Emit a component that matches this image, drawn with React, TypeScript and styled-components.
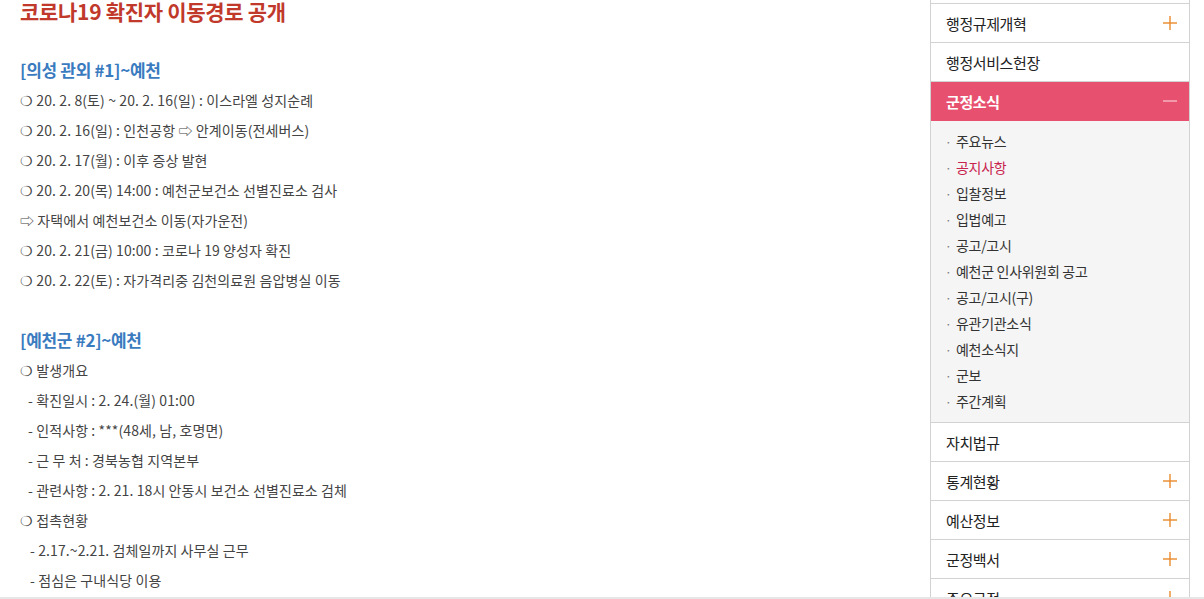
import styled, { createGlobalStyle } from 'styled-components';

const GlobalStyle = createGlobalStyle`
  html, body {
    margin: 0;
    padding: 0;
    background: #ffffff;
    font-family: 'Noto Sans CJK KR', 'Noto Sans', sans-serif;
    overflow: hidden;
  }
`;

const Screen = styled.div`
  width: 1204px;
  height: 599px;
  display: flex;
  flex-direction: column;
  overflow: hidden;
`;

const Page = styled.div`
  flex: 1;
  display: flex;
  overflow: hidden;
`;

const BottomStrip = styled.div`
  height: 2px;
  background: #e6e6e6;
`;

// 본문
const Main = styled.div`
  flex: 1;
  padding-left: 20px;
  color: #444;
`;

const Title = styled.h2`
  margin: 0;
  font-size: 21px;
  line-height: 23px;
  font-weight: 700;
  color: #c0392b;
  letter-spacing: -0.3px;
`;

const Section = styled.div<{ $first?: boolean }>`
  margin-top: ${(p) => (p.$first ? '32px' : '30px')};
`;

const SectionTitle = styled.h3`
  margin: 0;
  font-size: 17px;
  line-height: 30px;
  font-weight: 700;
  color: #3a7bbf;
  letter-spacing: -0.3px;
`;

const Line = styled.p<{ $indent?: number }>`
  margin: 0;
  font-size: 14px;
  line-height: 30px;
  color: #444;
  letter-spacing: 0.1px;
  padding-left: ${(p) => p.$indent || 0}px;
  white-space: nowrap;
`;

// 사이드 메뉴
const Side = styled.div`
  width: 258px;
  margin-right: 14px;
  border-left: 1px solid #d2d2d2;
  border-right: 1px solid #d2d2d2;
  padding-top: 3px;
`;

const MenuList = styled.ul`
  list-style: none;
  margin: 0;
  padding: 0;
  border-top: 1px solid #d2d2d2;
`;

const MenuRow = styled.li<{ $active?: boolean }>`
  height: 38px;
  display: flex;
  align-items: center;
  justify-content: space-between;
  padding: 0 12px 0 15px;
  border-bottom: 1px solid ${(p) => (p.$active ? '#e8506f' : '#d2d2d2')};
  background: ${(p) => (p.$active ? '#e8506f' : '#fff')};
  color: ${(p) => (p.$active ? '#fff' : '#222')};
  font-size: 15px;
  font-weight: ${(p) => (p.$active ? 700 : 400)};
  letter-spacing: -0.4px;
`;

const SubList = styled.ul`
  list-style: none;
  margin: 0;
  padding: 7px 0 8px;
  background: #f5f5f5;
  border-bottom: 1px solid #d2d2d2;
`;

const SubItem = styled.li<{ $active?: boolean }>`
  display: flex;
  align-items: center;
  height: 26px;
  padding-left: 14px;
  font-size: 14px;
  letter-spacing: -0.3px;
  color: ${(p) => (p.$active ? '#c8234f' : '#333')};
`;

const Dot = styled.span`
  width: 11px;
  color: #777;
  font-size: 12px;
`;

function Plus() {
  return (
    <svg width="14" height="14" viewBox="0 0 14 14">
      <line x1="7" y1="0" x2="7" y2="14" stroke="#e8892b" strokeWidth="1.4" />
      <line x1="0" y1="7" x2="14" y2="7" stroke="#e8892b" strokeWidth="1.4" />
    </svg>
  );
}

function Minus() {
  return (
    <svg width="14" height="14" viewBox="0 0 14 14">
      <line x1="0" y1="7" x2="14" y2="7" stroke="#f6c9d3" strokeWidth="1.2" />
    </svg>
  );
}

const subMenus = [
  '주요뉴스',
  '공지사항',
  '입찰정보',
  '입법예고',
  '공고/고시',
  '예천군 인사위원회 공고',
  '공고/고시(구)',
  '유관기관소식',
  '예천소식지',
  '군보',
  '주간계획',
];

const section1 = [
  '❍ 20. 2. 8(토) ~ 20. 2. 16(일) : 이스라엘 성지순례',
  '❍ 20. 2. 16(일) : 인천공항 ⇨ 안계이동(전세버스)',
  '❍ 20. 2. 17(월) : 이후 증상 발현',
  '❍ 20. 2. 20(목) 14:00 : 예천군보건소 선별진료소 검사',
  '⇨ 자택에서 예천보건소 이동(자가운전)',
  '❍ 20. 2. 21(금) 10:00 : 코로나 19 양성자 확진',
  '❍ 20. 2. 22(토) : 자가격리중 김천의료원 음압병실 이동',
];

const section2: [string, number][] = [
  ['❍ 발생개요', 0],
  ['- 확진일시 : 2. 24.(월) 01:00', 8],
  ['- 인적사항 : ***(48세, 남, 호명면)', 8],
  ['- 근 무 처 : 경북농협 지역본부', 8],
  ['- 관련사항 : 2. 21. 18시 안동시 보건소 선별진료소 검체', 8],
  ['❍ 접촉현황', 0],
  ['- 2.17.~2.21. 검체일까지 사무실 근무', 10],
  ['- 점심은 구내식당 이용', 10],
];

export default function App() {
  return (
    <>
      <GlobalStyle />
      <Screen>
        <Page>
          <Main>
            <Title>코로나19 확진자 이동경로 공개</Title>
            <Section $first>
              <SectionTitle>[의성 관외 #1]~예천</SectionTitle>
              {section1.map((t) => (
                <Line key={t}>{t}</Line>
              ))}
            </Section>
            <Section>
              <SectionTitle>[예천군 #2]~예천</SectionTitle>
              {section2.map(([t, indent]) => (
                <Line key={t} $indent={indent}>
                  {t}
                </Line>
              ))}
            </Section>
          </Main>
          <Side>
            <MenuList>
              <MenuRow>
                행정규제개혁
                <Plus />
              </MenuRow>
              <MenuRow>행정서비스헌장</MenuRow>
              <MenuRow $active>
                군정소식
                <Minus />
              </MenuRow>
              <SubList>
                {subMenus.map((m) => (
                  <SubItem key={m} $active={m === '공지사항'}>
                    <Dot>·</Dot>
                    {m}
                  </SubItem>
                ))}
              </SubList>
              <MenuRow>자치법규</MenuRow>
              <MenuRow>
                통계현황
                <Plus />
              </MenuRow>
              <MenuRow>
                예산정보
                <Plus />
              </MenuRow>
              <MenuRow>
                군정백서
                <Plus />
              </MenuRow>
              <MenuRow>
                주요규정
                <Plus />
              </MenuRow>
            </MenuList>
          </Side>
        </Page>
        <BottomStrip />
      </Screen>
    </>
  );
}
